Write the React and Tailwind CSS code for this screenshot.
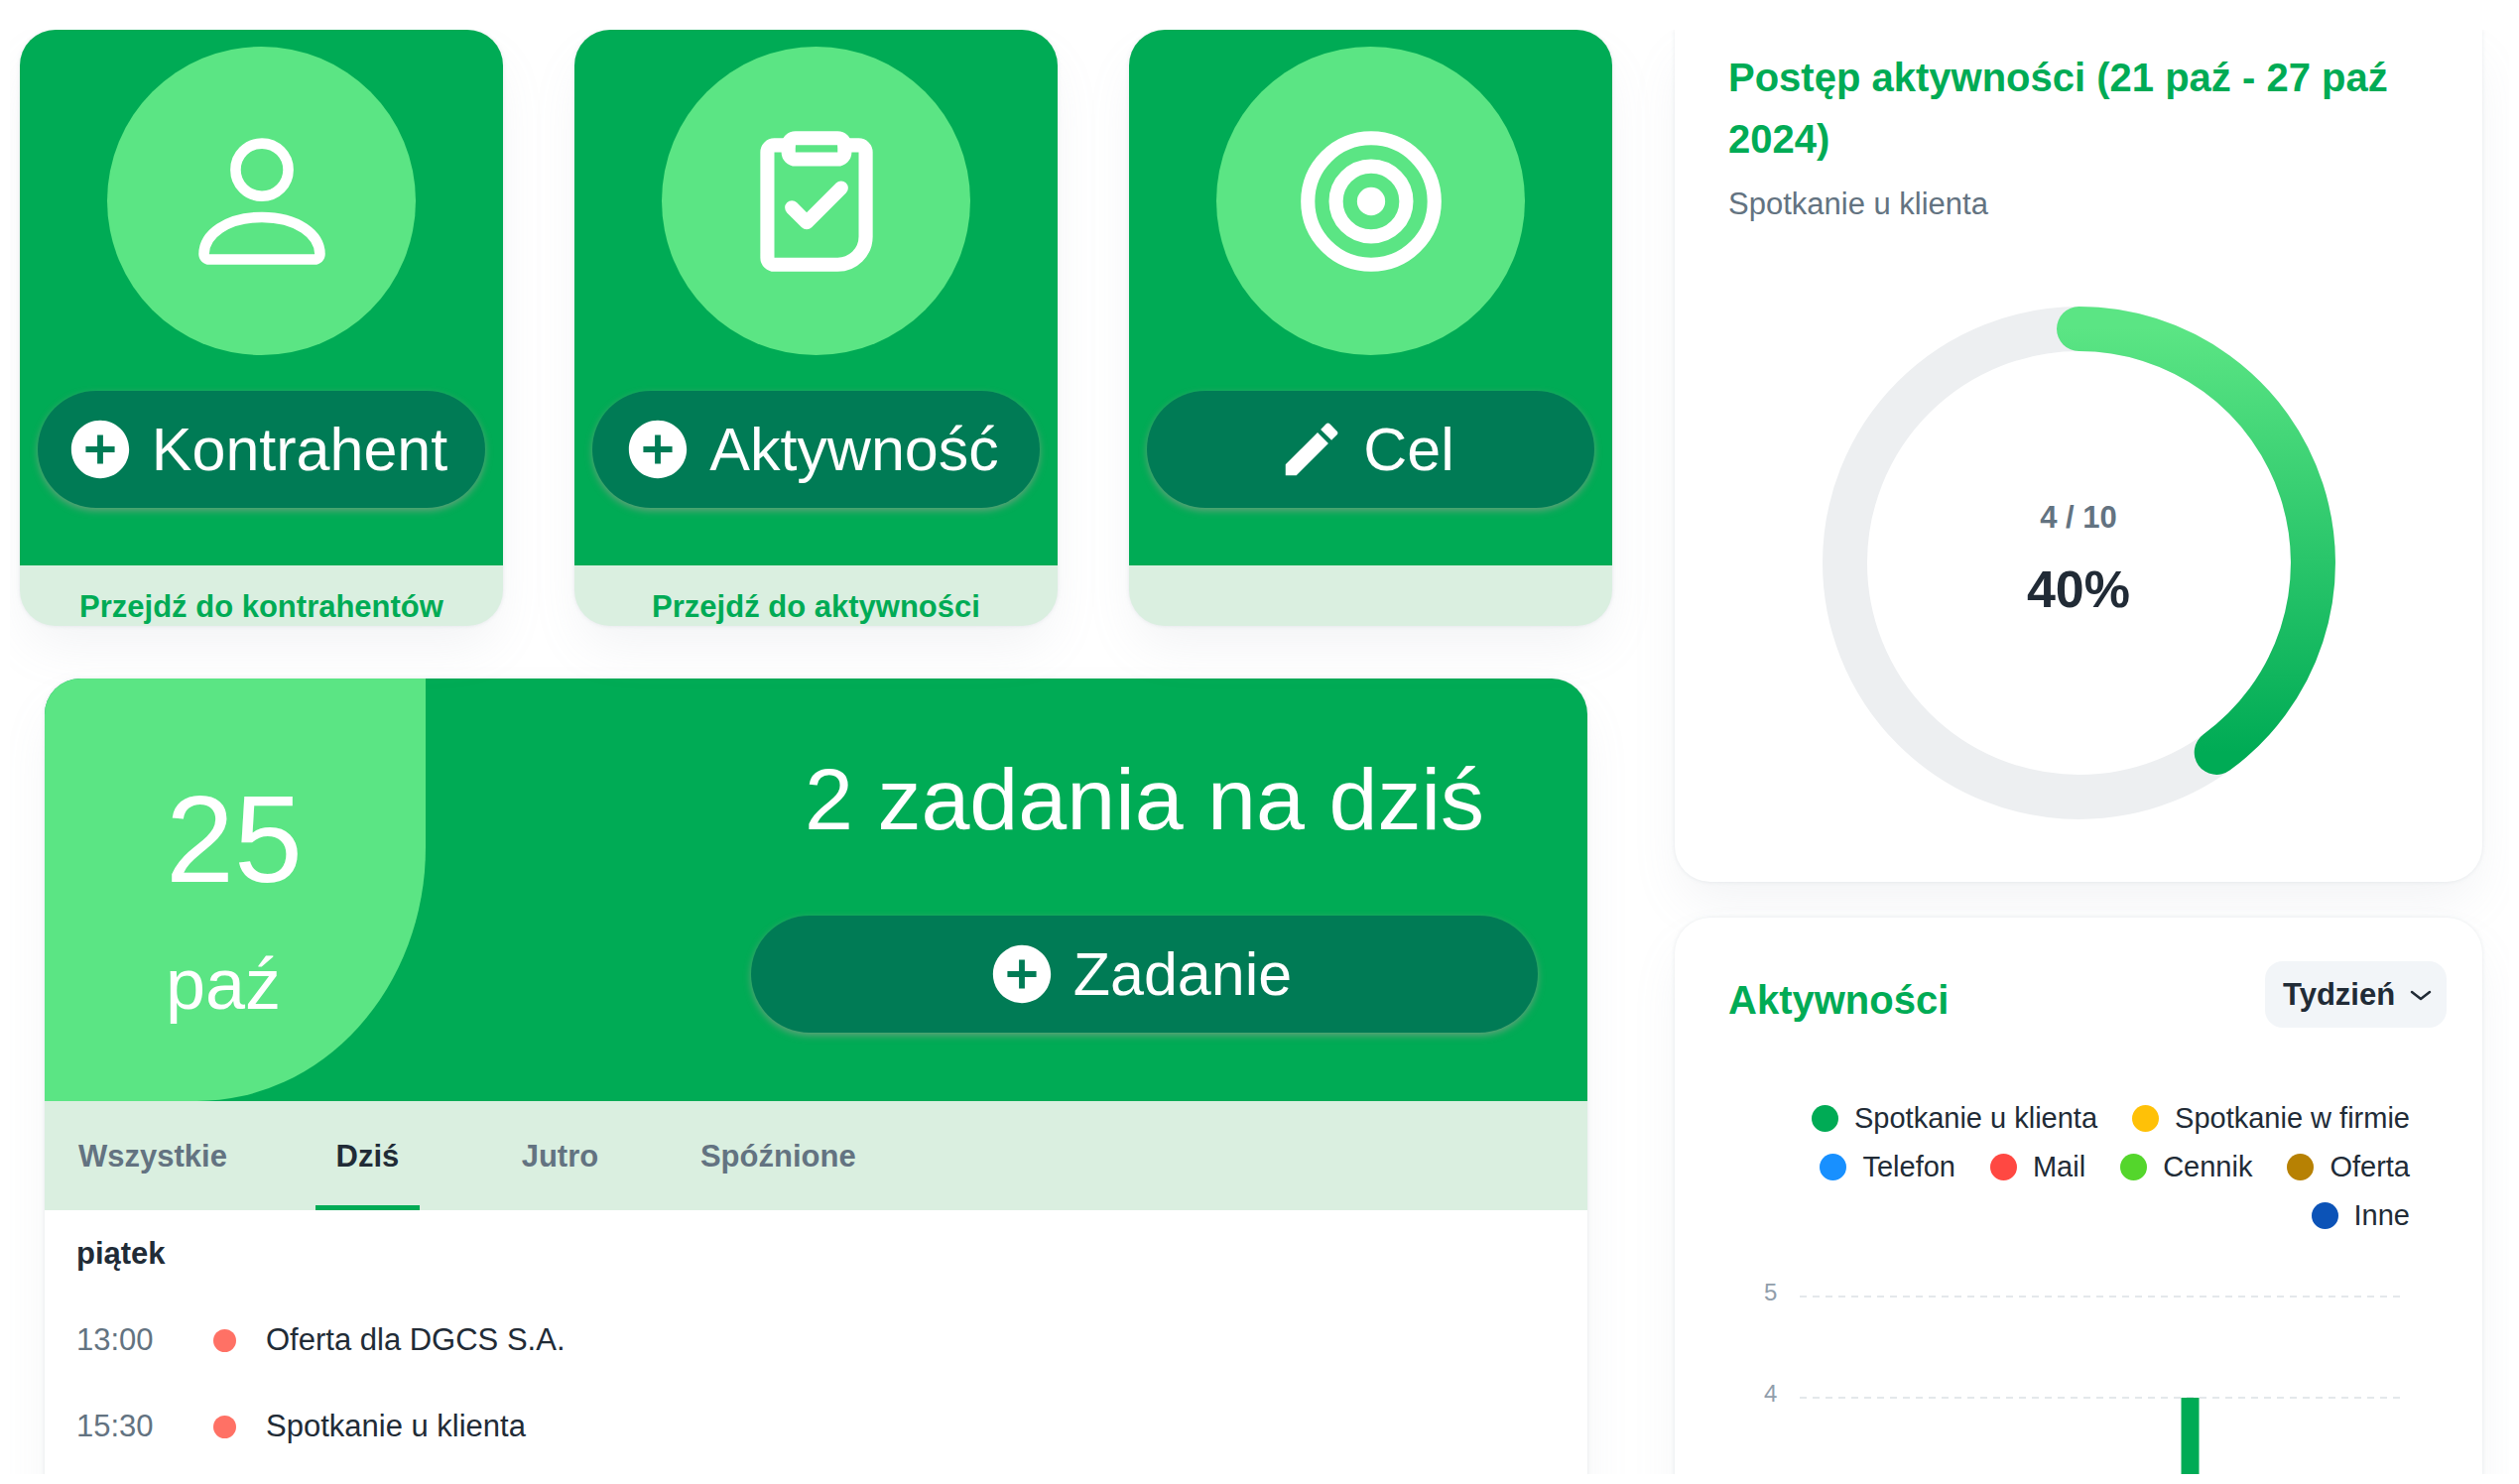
import React, { useState } from 'react';

const QUICK_CARDS = [
  { id: 'contractor', label: 'Kontrahent', action: 'add', link: 'Przejdź do kontrahentów' },
  { id: 'activity', label: 'Aktywność', action: 'add', link: 'Przejdź do aktywności' },
  { id: 'goal', label: 'Cel', action: 'edit', link: '' },
];

const TABS = ['Wszystkie', 'Dziś', 'Jutro', 'Spóźnione'];

const TASKS = [
  { time: '13:00', title: 'Oferta dla DGCS S.A.' },
  { time: '15:30', title: 'Spotkanie u klienta' },
];

const LEGEND = [
  { name: 'Spotkanie u klienta', color: 'bg-[#00ab55]' },
  { name: 'Spotkanie w firmie', color: 'bg-[#ffc107]' },
  { name: 'Telefon', color: 'bg-[#1890ff]' },
  { name: 'Mail', color: 'bg-[#ff4842]' },
  { name: 'Cennik', color: 'bg-[#54d62c]' },
  { name: 'Oferta', color: 'bg-[#b78103]' },
  { name: 'Inne', color: 'bg-[#0c53b7]' },
];

const CARD_SHADOW = 'shadow-[0_0_4px_rgba(145,158,171,0.2),0_26px_52px_-8px_rgba(145,158,171,0.12)]';

const CardIcon = ({ id }) => (
  <svg viewBox="0 0 24 24" className="w-[170px] h-[170px] text-white" fill="none" stroke="currentColor" strokeLinecap="round" strokeLinejoin="round" aria-hidden="true">
    {id === 'contractor' && (
      <g strokeWidth="1.5">
        <circle cx="12" cy="7.5" r="3.75" />
        <path d="M3.75 19.5C3.75 16.7 7 14.25 12 14.25s8.25 2.45 8.25 5.25a.75.75 0 0 1-.75.75h-15a.75.75 0 0 1-.75-.75z" />
      </g>
    )}
    {id === 'activity' && (
      <g strokeWidth="2">
        <path d="M8 4H6a1 1 0 0 0-1 1v15a1 1 0 0 0 1 1h9a4 4 0 0 0 4-4V5a1 1 0 0 0-1-1h-2" />
        <rect x="8" y="3" width="8" height="3" rx="1" />
        <path d="M8.5 12.9l2.1 2.1 4.9-4.9" />
      </g>
    )}
    {id === 'goal' && (
      <g strokeWidth="2">
        <circle cx="12" cy="12" r="9" />
        <circle cx="12" cy="12" r="5" />
        <circle cx="12" cy="12" r="2" fill="currentColor" stroke="none" />
      </g>
    )}
  </svg>
);

const ActionIcon = ({ type }) => (
  <svg viewBox="0 0 24 24" className="w-[70px] h-[70px] shrink-0 -ml-[10px]" fill="currentColor" aria-hidden="true">
    {type === 'add' ? (
      <path d="M12 2C6.48 2 2 6.48 2 12s4.48 10 10 10 10-4.48 10-10S17.52 2 12 2zm5 11h-4v4h-2v-4H7v-2h4V7h2v4h4v2z" />
    ) : (
      <path d="M3 17.25V21h3.75L17.81 9.94l-3.75-3.75L3 17.25zM20.71 7.04a.996.996 0 0 0 0-1.41l-2.34-2.34a.996.996 0 0 0-1.41 0l-1.83 1.83 3.75 3.75 1.83-1.83z" />
    )}
  </svg>
);

const PillButton = ({ type, children }) => (
  <button type="button"
    className="w-full h-[118px] rounded-full bg-[#007b55] text-white text-[61px] leading-[72px] flex items-center justify-center gap-[17px] shadow-[0_3px_7px_rgba(160,155,145,0.6)]">
    <ActionIcon type={type} />
    {children}
  </button>
);

const QuickCard = ({ card }) => (
  <div className={`rounded-[36px] overflow-hidden bg-[#daefe0] ${CARD_SHADOW}`}>
    <div className="bg-[#00ab55] px-[18px] pt-[17px] pb-[58px] flex flex-col items-center">
      <div className="w-[311px] h-[311px] mb-[36px] rounded-full bg-[#5be584] flex items-center justify-center">
        <CardIcon id={card.id} />
      </div>
      <PillButton type={card.action}>{card.label}</PillButton>
    </div>
    <div className="h-[61px] pt-[23px] text-center">
      {card.link && (
        <a href="#" className="block text-[31px] leading-[38px] font-bold text-[#00ab55]">{card.link}</a>
      )}
    </div>
  </div>
);

const TasksCard = () => {
  const [tab, setTab] = useState('Dziś');

  return (
    <section className={`mx-[25px] rounded-[36px] overflow-hidden bg-white ${CARD_SHADOW}`}>
      <div className="bg-[#00ab55] text-white flex justify-between">
        <div className="w-[384px] bg-[#5be584] rounded-br-[60%] pl-[122px] pt-[97px]">
          <p className="text-[124px] leading-[130px]">25</p>
          <p className="mt-[36px] text-[72px] leading-[90px]">paź</p>
        </div>
        <div className="w-[51%] mr-[50px] pt-[69px] pb-[69px] text-center">
          <h2 className="mb-[64px] text-[88px] leading-[106px]">2 zadania na dziś</h2>
          <PillButton type="add">Zadanie</PillButton>
        </div>
      </div>
      <div role="tablist" className="h-[110px] px-[34px] bg-[#daefe0] flex gap-[89px]">
        {TABS.map(name => (
          <button key={name} type="button" role="tab" aria-selected={tab === name} onClick={() => setTab(name)}
            className={`min-w-[105px] pt-[2px] text-[31px] font-bold ${tab === name ? 'text-[#212b36] shadow-[inset_0_-5px_0_#00ab55]' : 'text-[#637381]'}`}>
            {name}
          </button>
        ))}
      </div>
      <div className="px-[32px] pt-[1px] pb-[60px] text-[31px] text-[#212b36]">
        <h3 className="h-[87px] flex items-center font-bold">piątek</h3>
        <ul>
          {TASKS.map(task => (
            <li key={task.time} className="h-[87px] flex items-center">
              <span className="w-[138px] text-[#637381]">{task.time}</span>
              <span className="w-[23px] h-[23px] mr-[30px] rounded-full bg-[#ff7165]" />
              <span>{task.title}</span>
            </li>
          ))}
        </ul>
      </div>
    </section>
  );
};

const ProgressCard = () => {
  const done = 4;
  const total = 10;
  const percent = (done / total) * 100;

  return (
    <section className={`rounded-b-[36px] bg-white px-[54px] pt-[17px] pb-[63px] ${CARD_SHADOW}`}>
      <h2 className="text-[40px] leading-[62px] font-bold text-[#00ab55]">Postęp aktywności (21 paź - 27 paź 2024)</h2>
      <p className="mt-3 text-[31px] leading-[46px] text-[#637381]">Spotkanie u klienta</p>
      <div className="relative w-[517px] h-[517px] mt-[80px] mx-auto">
        <svg viewBox="0 0 517 517" className="w-full h-full" fill="none" aria-hidden="true">
          <defs>
            <linearGradient id="progress" gradientUnits="userSpaceOnUse" x1="258" y1="22" x2="258" y2="450">
              <stop offset="0" stopColor="#5be584" />
              <stop offset="1" stopColor="#00ab55" />
            </linearGradient>
          </defs>
          <circle cx="258.5" cy="258.5" r="236" stroke="#edeff1" strokeWidth="45" />
          <path d="M258.5 22.5a236 236 0 0 1 138.7 426.9" stroke="url(#progress)" strokeWidth="45" strokeLinecap="round" />
        </svg>
        <div className="absolute inset-0 pb-2 flex flex-col items-center justify-center gap-[14px] font-bold">
          <span className="text-[31px] leading-[46px] text-[#637381]">{done} / {total}</span>
          <span className="text-[52px] leading-[70px] text-[#212b36]">{percent}%</span>
        </div>
      </div>
    </section>
  );
};

const ActivitiesCard = () => {
  const [range, setRange] = useState('week');

  return (
    <section className={`rounded-[36px] bg-white pt-[44px] pb-[60px] ${CARD_SHADOW}`}>
      <div className="pl-[54px] pr-[36px] flex items-start justify-between">
        <h2 className="pt-[11px] text-[40px] leading-[57px] font-bold text-[#00ab55]">Aktywności</h2>
        <div className="relative">
          <select aria-label="Zakres" value={range} onChange={(e) => setRange(e.target.value)}
            className="appearance-none w-[183px] h-[67px] pt-[2px] pl-[18px] rounded-[18px] bg-[#f2f5f8] text-[31px] font-bold text-[#212b36] outline-none">
            <option value="week">Tydzień</option>
            <option value="month">Miesiąc</option>
          </select>
          <svg viewBox="0 0 22 12" className="absolute right-[15px] top-[29px] w-[22px] h-[12px] pointer-events-none" fill="none" stroke="#212b36" strokeWidth="2.5" strokeLinecap="round" strokeLinejoin="round" aria-hidden="true">
            <path d="M2 2l9 7 9-7" />
          </svg>
        </div>
      </div>
      <ul className="mt-[66px] pl-[54px] pr-[73px] flex flex-wrap justify-end gap-x-[35px] text-[29px] leading-[49px] text-[#212b36]">
        {LEGEND.map(item => (
          <li key={item.name} className="flex items-center gap-[16px]">
            <span className={`w-[27px] h-[27px] rounded-full ${item.color}`} />
            {item.name}
          </li>
        ))}
      </ul>
      <div className="pl-[90px] pr-[82px]">
        <svg className="block w-full h-[300px]" role="img" aria-label="Wykres aktywności">
          {[5, 4].map((value, i) => (
            <g key={value}>
              <text x="0" y={61 + i * 102} fontSize="24" fill="#919eab">{value}</text>
              <line x1="36" x2="100%" y1={57 + i * 102} y2={57 + i * 102} stroke="#e4e8eb" strokeWidth="2" strokeDasharray="7 6" />
            </g>
          ))}
          <rect x="65.5%" y="159" width="18" height="141" fill="#00ab55" />
        </svg>
      </div>
    </section>
  );
};

const App = () => (
  <div className="h-screen overflow-hidden bg-white px-[10px] pt-[30px] pb-[10px] font-['Liberation_Sans',Arial,sans-serif]">
    <main className="h-full overflow-hidden pl-[10px] pr-[27px] grid grid-cols-[1605fr_814fr] items-start gap-[63px]">
      <div>
        <div className="mb-[53px] grid grid-cols-3 gap-[72px]">
          {QUICK_CARDS.map(card => <QuickCard key={card.id} card={card} />)}
        </div>
        <TasksCard />
      </div>
      <div className="flex flex-col gap-[36px]">
        <ProgressCard />
        <ActivitiesCard />
      </div>
    </main>
  </div>
);

export default App;
